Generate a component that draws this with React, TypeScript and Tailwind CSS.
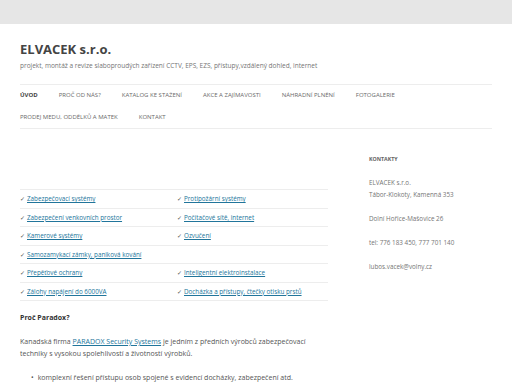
import React from "react";

const navRow1 = ["PROČ OD NÁS?", "KATALOG KE STAŽENÍ", "AKCE A ZAJÍMAVOSTI", "NÁHRADNÍ PLNĚNÍ", "FOTOGALERIE"];

const rows: [string, string][] = [
  ["Zabezpečovací systémy", "Protipožární systémy"],
  ["Zabezpečení venkovních prostor", "Počítačové sítě, internet"],
  ["Kamerové systémy", "Ozvučení"],
  ["Samozamykací zámky, paniková kování", ""],
  ["Přepěťové ochrany", "Inteligentní elektroinstalace"],
  ["Zálohy napájení do 6000VA", "Docházka a přístupy, čtečky otisku prstů"],
];

function Check({ text }: { text: string }) {
  if (!text) return <div />;
  return (
    <div className="flex items-center gap-[2px]">
      <span className="text-[#555]">✓</span>
      <a href="#" className="text-[#21759b] underline">
        {text}
      </a>
    </div>
  );
}

export default function App() {
  return (
    <div className="w-[512px] h-[384px] overflow-hidden bg-white font-['Open_Sans',sans-serif] text-[#444]">
      <div className="h-[24px] bg-[#e6e6e6]" />
      <div className="px-[20px]">
        {/* шапка */}
        <h1 className="mt-[17px] text-[13px] leading-[16px] font-bold text-[#444]">ELVACEK s.r.o.</h1>
        <p className="mt-[4px] text-[6.5px] leading-[10px] text-[#757575]">
          projekt, montáž a revize slaboproudých zařízení CCTV, EPS, EZS, přístupy,vzdálený dohled, internet
        </p>

        <nav className="mt-[13px] border-t border-b border-[#ededed] text-[6px] text-[#6a6a6a] uppercase">
          <div className="flex items-center h-[21px] gap-[21px]">
            <span className="font-bold text-[#444]">ÚVOD</span>
            {navRow1.map((n) => (
              <span key={n}>{n}</span>
            ))}
          </div>
          <div className="flex items-center h-[22px] gap-[21px]">
            <span>PRODEJ MEDU, ODDĚLKŮ A MATEK</span>
            <span>KONTAKT</span>
          </div>
        </nav>

        <div className="grid grid-cols-[308px_123px] gap-[41px]">
          {/* obsah */}
          <div>
            <div className="mt-[60px] border-b border-[#ededed] text-[6.3px]">
              {rows.map(([a, b], i) => (
                <div key={i} className="grid grid-cols-[157px_1fr] items-center h-[18.5px] border-t border-[#ededed]">
                  <Check text={a} />
                  <Check text={b} />
                </div>
              ))}
            </div>

            <h3 className="mt-[11px] text-[7px] leading-[12px] font-bold text-[#333]">Proč Paradox?</h3>
            <p className="mt-[12px] text-[7px] leading-[12px] text-[#555]">
              Kanadská firma <a href="#" className="text-[#21759b] underline">PARADOX Security Systems</a> je jedním z
              předních výrobců zabezpečovací techniky s vysokou spolehlivostí a životností výrobků.
            </p>
            <ul className="mt-[12px] text-[7px] leading-[12px] text-[#555]">
              <li className="flex pl-[11px] gap-[4px]">
                <span>•</span>
                <span>komplexní řešení přístupu osob spojené s evidencí docházky, zabezpečení atd.</span>
              </li>
            </ul>
          </div>

          {/* postranní panel */}
          <aside className="text-[6.3px] leading-[12px] text-[#757575]">
            <h3 className="mt-[25px] text-[5.3px] leading-[10px] font-bold text-[#636363] uppercase">Kontakty</h3>
            <p className="mt-[13px]">
              ELVACEK s.r.o.
              <br />
              Tábor-Klokoty, Kamenná 353
            </p>
            <p className="mt-[12px]">Dolní Hořice-Mašovice 26</p>
            <p className="mt-[12px]">tel: 776 183 450, 777 701 140</p>
            <p className="mt-[12px]">lubos.vacek@volny.cz</p>
          </aside>
        </div>
      </div>
    </div>
  );
}
